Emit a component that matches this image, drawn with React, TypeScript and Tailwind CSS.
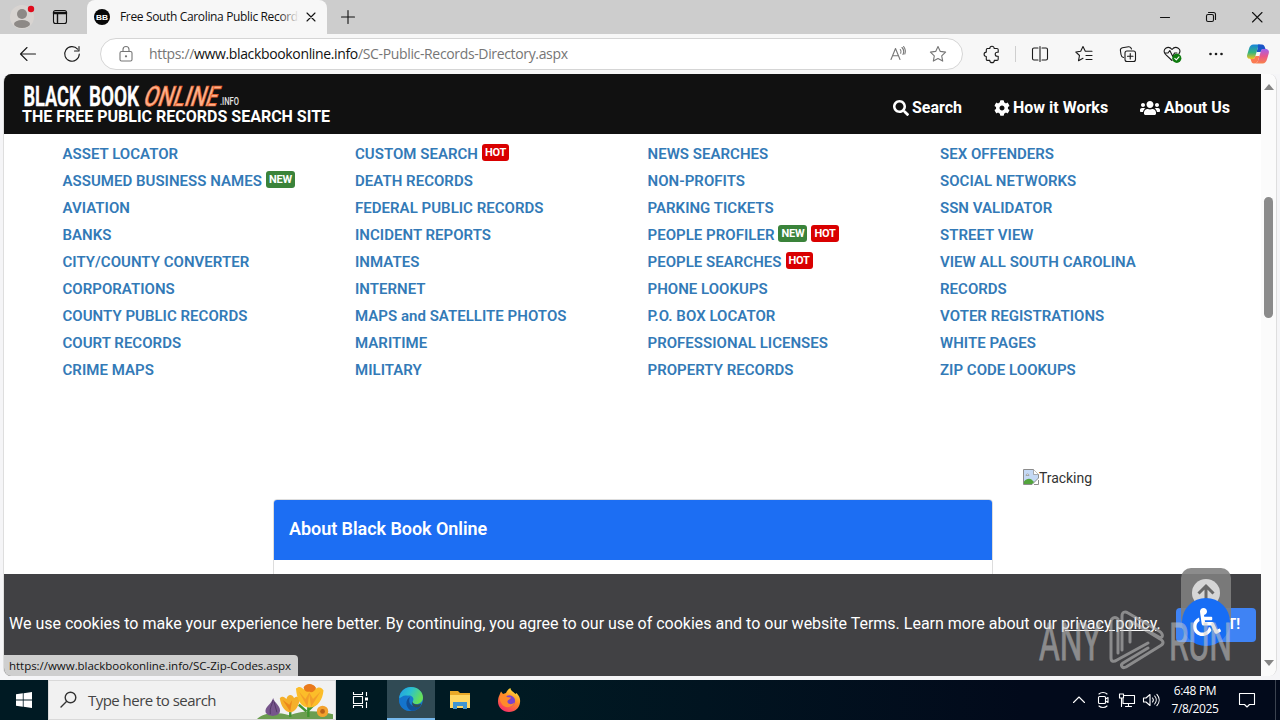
import React from 'react';
import { FaCog, FaSearch, FaUsers, FaWheelchair } from 'react-icons/fa';

interface DirectoryLink {
  label: string;
  tags?: ('NEW' | 'HOT')[];
}

const COLUMNS: DirectoryLink[][] = [
  [
    { label: 'ASSET LOCATOR' },
    { label: 'ASSUMED BUSINESS NAMES', tags: ['NEW'] },
    { label: 'AVIATION' },
    { label: 'BANKS' },
    { label: 'CITY/COUNTY CONVERTER' },
    { label: 'CORPORATIONS' },
    { label: 'COUNTY PUBLIC RECORDS' },
    { label: 'COURT RECORDS' },
    { label: 'CRIME MAPS' },
  ],
  [
    { label: 'CUSTOM SEARCH', tags: ['HOT'] },
    { label: 'DEATH RECORDS' },
    { label: 'FEDERAL PUBLIC RECORDS' },
    { label: 'INCIDENT REPORTS' },
    { label: 'INMATES' },
    { label: 'INTERNET' },
    { label: 'MAPS and SATELLITE PHOTOS' },
    { label: 'MARITIME' },
    { label: 'MILITARY' },
  ],
  [
    { label: 'NEWS SEARCHES' },
    { label: 'NON-PROFITS' },
    { label: 'PARKING TICKETS' },
    { label: 'PEOPLE PROFILER', tags: ['NEW', 'HOT'] },
    { label: 'PEOPLE SEARCHES', tags: ['HOT'] },
    { label: 'PHONE LOOKUPS' },
    { label: 'P.O. BOX LOCATOR' },
    { label: 'PROFESSIONAL LICENSES' },
    { label: 'PROPERTY RECORDS' },
  ],
  [
    { label: 'SEX OFFENDERS' },
    { label: 'SOCIAL NETWORKS' },
    { label: 'SSN VALIDATOR' },
    { label: 'STREET VIEW' },
    { label: 'VIEW ALL SOUTH CAROLINA RECORDS' },
    { label: 'VOTER REGISTRATIONS' },
    { label: 'WHITE PAGES' },
    { label: 'ZIP CODE LOOKUPS' },
  ],
];

interface IconProps {
  children: React.ReactNode;
  className?: string;
}

// 20x20 line icon used by the browser chrome and the tray
const Icon: React.FC<IconProps> = ({ children, className = '' }) => (
  <svg
    viewBox="0 0 20 20"
    className={`size-5 shrink-0 fill-none stroke-current ${className}`}
    strokeWidth={1.1}
    strokeLinecap="round"
    strokeLinejoin="round"
  >
    {children}
  </svg>
);

const Slot: React.FC<IconProps> = ({ children, className = 'w-11' }) => (
  <div className={`flex h-full shrink-0 items-center justify-center ${className}`}>{children}</div>
);

const TitleBar = () => (
  <div className="flex h-[34px] bg-[#cdcdcd] text-[#111]">
    <Slot>
      <svg viewBox="0 0 26 26" className="size-[26px]">
        <circle cx="13" cy="13" r="12" fill="#d8d4d1" />
        <circle cx="13" cy="10" r="5" fill="#8d8986" />
        <ellipse cx="13" cy="20" rx="8" ry="4" fill="#8d8986" />
        <circle cx="22" cy="5" r="3.2" fill="#e00b1c" />
      </svg>
    </Slot>
    <Slot className="w-8">
      <Icon>
        <rect x="3.5" y="3.5" width="13" height="13" rx="2" />
        <path d="M3.5 5.5h13M3.5 6.500h13M7.500 7v9" strokeWidth={1.4} />
      </Icon>
    </Slot>
    <div className="ml-[11px] flex w-60 items-center rounded-t-lg bg-[#f7f7f7] pl-[7px]">
      <svg viewBox="0 0 16 16" className="size-4">
        <circle cx="8" cy="8" r="8" fill="#080808" />
        <text x="8" y="11" textAnchor="middle" fontSize="8" fontWeight="700" fill="#fff" fontFamily="Liberation Sans, sans-serif" textLength="12" lengthAdjust="spacingAndGlyphs">
          BB
        </text>
      </svg>
      <div className="relative ml-2.5 w-[179px] overflow-hidden text-xs tracking-[-0.350px] whitespace-nowrap">
        Free South Carolina Public Records
        <div className="absolute inset-y-0 right-0 w-5 bg-linear-to-r from-transparent to-[#f7f7f7]" />
      </div>
      <Icon className="ml-[2px]">
        <path d="M6 6l8 8M14 6l-8 8" />
      </Icon>
    </div>
    <Slot className="w-[42px]">
      <Icon>
        <path d="M10 3.5v13M3.5 10h13" />
      </Icon>
    </Slot>
    <div className="flex-1" />
    <Slot className="w-[46px]">
      <Icon>
        <path d="M5.5 10.5h9" />
      </Icon>
    </Slot>
    <Slot className="w-[46px]">
      <Icon>
        <rect x="5.5" y="7.5" width="7" height="7" rx="1.5" />
        <path d="M7.5 5.5h5a2 2 0 0 1 2 2v5" />
      </Icon>
    </Slot>
    <Slot className="w-[46px]">
      <Icon>
        <path d="M5.5 5.5l9.5 9.5M15 5.5l-9.5 9.5" />
      </Icon>
    </Slot>
  </div>
);

const Toolbar = () => (
  <div className="flex h-10 items-center bg-[#f7f7f7] pl-1.5 text-[#1b1b1b]">
    <Slot>
      <Icon>
        <path d="M17.5 10H2.5M9 3.5L2.5 10 9 16.5" />
      </Icon>
    </Slot>
    <Slot>
      <Icon>
        <path d="M15.6 5.2A7.3 7.3 0 1 0 17.3 10M17 2.5v4.500h-4.500" />
      </Icon>
    </Slot>
    <div className="ml-1.5 flex h-8 w-[863px] shrink-0 items-center rounded-full border border-[#d5d5d5] bg-white pl-[15px] text-[#767676]">
      <Icon>
        <rect x="4" y="7.5" width="12" height="9.5" rx="1.5" />
        <path d="M7 7.5V5.500a3 3 0 0 1 6 0v2" />
        <circle cx="10" cy="12.3" r=".6" fill="currentColor" />
      </Icon>
      <span className="ml-[13px] flex-1 text-sm tracking-[-0.350px]">
        https://<span className="text-[#111]">www.blackbookonline.info</span>/SC-Public-Records-Directory.aspx
      </span>
      <Icon>
        <path d="M3 15.5L7.5 4.500 12 15.500M4.500 11.800h6M12.300 5.500c1 1.200 1 2.600.4 3.800M14 3.500c2 2 2.100 4.600 1 7" />
        <path d="M15.600 2.500c1.900 2.500 2.200 5 1.200 7.500" />
      </Icon>
      <Icon className="mr-[14px] ml-5">
        <path d="M10 2.500l2.300 4.900 5.300.7-3.900 3.700 1 5.300-4.700-2.600-4.700 2.600 1-5.300-3.900-3.700 5.300-.7z" />
      </Icon>
    </div>
    <Slot className="ml-[7px] w-11">
      <Icon>
        <path d="M5 4.500h2.800a2.200 2.200 0 0 1 4.400 0H15a1.200 1.200 0 0 1 1.200 1.200v2.500h-1a2 2 0 0 0 0 4h1v3a1.200 1.200 0 0 1-1.200 1.200h-2.700a2.200 2.200 0 0 1-4.500 0H5.500a1.200 1.200 0 0 1-1.200-1.200v-2.700a2.200 2.200 0 0 1 0-4.400V5.700z" />
      </Icon>
    </Slot>
    <div className="mr-0.5 ml-px h-4 w-px bg-[#cfcfcf]" />
    <Slot>
      <Icon>
        <path d="M8 4H4a1.500 1.500 0 0 0-1.500 1.500v9A1.500 1.500 0 0 0 4 16h4M12 4h4a1.500 1.500 0 0 1 1.500 1.500v9A1.500 1.500 0 0 1 16 16h-4M10 2.500v15" />
      </Icon>
    </Slot>
    <Slot>
      <Icon>
        <path d="M11.300 7.300L9 2.500 6.700 7.300l-4.900.7 3.700 3.500-1 5.200L9 14.300M11.300 7.300H18M12 11.500h6M12 15.500h6" />
      </Icon>
    </Slot>
    <Slot>
      <Icon>
        <path d="M5.500 13.500C3.500 13 3.200 12 3 10.500l-.6-4C2.200 5 3 4 4.500 3.700l6-.9c1.500-.2 2.600.6 3 2.200" />
        <rect x="7" y="7" width="10.5" height="10.5" rx="2" />
        <path d="M12.250 9.500v5.500M9.500 12.250H15" />
      </Icon>
    </Slot>
    <Slot>
      <Icon>
        <path d="M10 16.500L3.500 10.300C1.500 8.300 1.800 5.500 3.700 4.200 5.700 2.900 8.300 3.300 10 5.500c1.700-2.200 4.300-2.600 6.300-1.300 1.700 1.200 2 3.500.7 5.400M3 9h3l1.800-2.500 3 6L12.500 9H15" />
        <circle cx="14.8" cy="14.3" r="4.6" fill="#0f7b0f" stroke="none" />
        <path d="M12.800 14.400l1.500 1.500 2.700-3" stroke="#fff" />
      </Icon>
    </Slot>
    <Slot>
      <Icon>
        <g fill="currentColor" stroke="none">
          <circle cx="4.5" cy="10" r="1.3" />
          <circle cx="10" cy="10" r="1.3" />
          <circle cx="15.5" cy="10" r="1.3" />
        </g>
      </Icon>
    </Slot>
    <Slot className="w-10">
      <Copilot />
    </Slot>
  </div>
);

const Copilot = () => (
  <svg viewBox="0 0 24 24" className="size-6">
    <defs>
      <linearGradient id="cpA" x1="0" y1="0" x2="0" y2="1">
        <stop offset="0" stopColor="#1684dc" />
        <stop offset=".55" stopColor="#35b57e" />
        <stop offset="1" stopColor="#f2c41c" />
      </linearGradient>
      <linearGradient id="cpB" x1="0" y1="0" x2="0" y2="1">
        <stop offset="0" stopColor="#a161ee" />
        <stop offset=".5" stopColor="#e9578b" />
        <stop offset="1" stopColor="#f9824a" />
      </linearGradient>
    </defs>
    <path d="M17 7h2.500c2.500 0 4 1.800 3.300 4.200l-1.800 6c-.7 2.400-2 4.300-4.500 4.300H8.500c2 0 3-1 3.600-2.900l2.500-8.600C15 8.500 15.500 7 17 7z" fill="url(#cpB)" />
    <path d="M7 17H4.500C2 17 .5 15.200 1.200 12.800l1.800-6C3.700 4.400 5 2.500 7.500 2.500h8c-2 0-3 1-3.600 2.900L9.400 14C9 15.500 8.500 17 7 17z" fill="url(#cpA)" />
    <path d="M12 2.500h4c1.500 0 2.300 1 2.700 2.300L19.500 7H17c-1.500 0-2 1.500-2.400 3h-4l1.300-4.600z" fill="#1b55c8" />
    <path d="M8 21.500c-1.500 0-2.300-1-2.700-2.300L4.500 17H7c1.500 0 2-1.500 2.400-3h4l-1.300 4.600c-.6 1.900-2 2.900-4.100 2.900z" fill="#fb7b52" />
  </svg>
);

const SiteHeader = () => (
  <header className="flex h-[60px] shrink-0 justify-between bg-[#111] pr-[31px] pl-[18px] text-white">
    <div className="pt-[9px]">
      <svg viewBox="0 0 220 26" className="h-[26px] w-[220px] overflow-visible" fontFamily="Liberation Sans Narrow, Roboto, sans-serif">
        <text x="1.5" y="23" fontSize="28" fontWeight="600" fill="#fff" stroke="#fff" strokeWidth=".5" textLength="57" lengthAdjust="spacingAndGlyphs">
          BLACK
        </text>
        <text x="67" y="23" fontSize="28" fontWeight="600" fill="#fff" stroke="#fff" strokeWidth=".5" textLength="50" lengthAdjust="spacingAndGlyphs">
          BOOK
        </text>
        <text fontSize="28" fontWeight="500" fill="#ffb08a" stroke="#e8622c" strokeWidth=".7" textLength="74" lengthAdjust="spacingAndGlyphs" transform="translate(120 23) skewX(-18)">
          ONLINE
        </text>
        <text x="198" y="22" fontSize="10.5" fontWeight="500" fill="#e4e4e4" textLength="19" lengthAdjust="spacingAndGlyphs">
          .INFO
        </text>
      </svg>
      <div className="-mt-[2px] text-base leading-5 font-bold whitespace-nowrap">THE FREE PUBLIC RECORDS SEARCH SITE</div>
    </div>
    <nav className="flex items-center pt-[7px] text-base font-bold whitespace-nowrap">
      <a className="mr-8 flex items-center gap-[3px]">
        <FaSearch className="size-4" />
        Search
      </a>
      <a className="mr-8 flex items-center gap-[3px]">
        <FaCog className="size-4" />
        How it Works
      </a>
      <a className="flex items-center gap-1">
        <FaUsers className="size-5" />
        About Us
      </a>
    </nav>
  </header>
);

const Tag: React.FC<{ kind: 'NEW' | 'HOT' }> = ({ kind }) => (
  <span
    className={`relative -top-[3px] ml-1 inline-block h-[17px] rounded-[3px] px-[3px] text-[11px] leading-[17px] font-bold tracking-[-0.200px] text-white ${
      kind === 'NEW' ? 'bg-[#3a833a]' : 'bg-[#d90000]'
    }`}
  >
    {kind}
  </span>
);

const Directory = () => (
  <div className="flex pt-[7px] pl-[58.5px]">
    {COLUMNS.map((column, index) => (
      <ul key={index} className="w-[292.5px] pr-[60px] text-[15px] leading-[27px] font-semibold tracking-[0.030px] text-[#337ab7]">
        {column.map((link) => (
          <li key={link.label} className={link.tags ? 'h-[27px] whitespace-nowrap' : ''}>
            {link.label}
            {link.tags?.map((tag) => (
              <Tag key={tag} kind={tag} />
            ))}
          </li>
        ))}
      </ul>
    ))}
  </div>
);

const BrokenImage = () => (
  <svg viewBox="0 0 16 16" className="size-4">
    <path d="M.5.5h10l5 5V9L9 15.500H.5z" fill="#c5d9f5" stroke="#8c8c8c" />
    <path d="M1 15v-2.500C3 10 6 9 8.500 10.500L11 13l-2 2z" fill="#53a43c" />
    <path d="M3 6.500a1.500 1.500 0 0 1 3 0zM10.500.5v5h5" fill="#fff" stroke="#8c8c8c" strokeWidth=".7" />
    <path d="M15.500 11v4.500H11" fill="none" stroke="#8c8c8c" />
  </svg>
);

const CookieBar = () => (
  <div className="flex h-[102px] shrink-0 items-center bg-[#414144] px-[5px] text-base text-white">
    <p className="flex-1 pb-0.5 whitespace-nowrap">
      We use cookies to make your experience here better. By continuing, you agree to our use of cookies and to our website Terms. Learn more about our{' '}
      <a className="underline">privacy policy</a>.
    </p>
    <button className="h-[34px] w-20 rounded-[4px] bg-[#3f83f4] pr-4 pb-0.5 text-right text-sm font-bold">GOT IT!</button>
  </div>
);

// Scroll-to-top button with the accessibility badge over it
const FloatingButtons = () => (
  <div className="absolute top-[568px] left-[1181px] h-[78px] w-[50px]">
    <div className="flex h-[60px] justify-center rounded-[10px] bg-[#808080]/90 pt-[11px]">
      <svg viewBox="0 0 28 28" className="size-7">
        <circle cx="14" cy="14" r="14" fill="#d6d6d6" />
        <path d="M14 24V7M6.500 14.500L14 7l7.500 7.500" fill="none" stroke="#686868" strokeWidth="3" />
      </svg>
    </div>
    <div className="absolute bottom-0 left-px flex size-12 items-center justify-center rounded-full bg-[#176df5] pl-0.5 text-white">
      <FaWheelchair className="size-7" />
    </div>
  </div>
);

const Watermark = () => (
  <svg viewBox="0 0 196 64" className="absolute top-[608px] left-[1038px] h-16 w-[196px] overflow-visible opacity-55">
    <g fill="#c8c8c8" stroke="#c8c8c8" strokeWidth=".9" fontFamily="Liberation Sans Narrow, Roboto, sans-serif" fontSize="51">
      <text x="1" y="51.500" textLength="62" lengthAdjust="spacingAndGlyphs">
        ANY
      </text>
      <text x="131" y="51.500" textLength="63" lengthAdjust="spacingAndGlyphs">
        RUN
      </text>
    </g>
    <g fill="none" stroke="#c8c8c8" strokeWidth="3" strokeLinejoin="round" strokeLinecap="round">
      <path d="M80 11c-3-3-7-1-7 3v36c0 4 3 4 6 2l31-17M80 11v34" />
      <path d="M84 42V8c0-4 3-5 6-3l31 18c5 3 4 8 0 6L92 13v21" />
      <path d="M96 15l26 16c4 2 4 5 0 7L88 59c-4 2-6-2-3-4l25-15" />
    </g>
  </svg>
);

const Scrollbar = () => (
  <div className="flex w-[15px] flex-col items-center rounded-r-lg bg-[#fbfbfb]">
    <svg viewBox="0 0 10 6" className="mt-2.5 h-1.5 w-2.5">
      <path d="M0 6l5-6 5 6z" fill="#858585" />
    </svg>
    <div className="mt-[107px] h-[121px] w-[9px] rounded-full bg-[#8b8b8b]" />
    <div className="flex-1" />
    <svg viewBox="0 0 10 6" className="mb-2.5 h-1.5 w-2.5">
      <path d="M0 0l5 6 5-6z" fill="#858585" />
    </svg>
  </div>
);

const Flowers = () => (
  <svg viewBox="8 0 80 40" className="h-[38px] w-20">
    <path d="M8 40c8-7 20-8 34-4 16-6 30-5 46-1v5z" fill="#6c9e50" />
    <path d="M43 38V27M62 38V17M62 31l8-8M60 32l-8-7" fill="none" stroke="#41942f" strokeWidth="2.5" />
    <path d="M25 18c1 5 9 9 7 15-2 5-13 5-15 0-1-6 6-8 8-15z" fill="#77558c" />
    <path d="M25 20c-1 5-4 8-3 15M26 22l3 11" fill="none" stroke="#513765" />
    <path d="M32 18c3-3 5-1 7 1 1-5 6-6 8-1 3-3 5-1 6 1-1 8-5 14-10 14s-10-6-11-15z" fill="#f5b02a" />
    <path d="M35 20l8 12 2-12-3 5zM51 20l-6 12" fill="#ea7e19" opacity=".8" />
    <path d="M49 8c3-3 6-2 8 1 2-6 10-8 13-1 4-3 7 0 8 2-1 10-6 18-15 18S50 20 49 8z" fill="#fcbd29" />
    <path d="M57 7c2-5 10-5 13 0-1 4-5 6-7 4-3 1-5-1-6-4z" fill="#e9791c" />
    <path d="M52 11l9 16 2-13 2 13 10-16-8 8-4-7-4 7z" fill="#f0922a" opacity=".7" />
    <circle cx="77" cy="32" r="6" fill="#f3a22d" />
    <circle cx="77" cy="32" r="2.5" fill="#b96119" />
  </svg>
);

const EdgeLogo = () => (
  <svg viewBox="0 0 24 24" className="size-6">
    <defs>
      <linearGradient id="edgeTop" x1="0" y1="0" x2="1" y2=".4">
        <stop offset="0" stopColor="#219be4" />
        <stop offset=".5" stopColor="#2bc1cf" />
        <stop offset="1" stopColor="#66df58" />
      </linearGradient>
    </defs>
    <circle cx="12" cy="12" r="12" fill="#1679cf" />
    <path d="M.2 11C1 4.500 6 0 12 0c7 0 12 5 12 10.500 0 4-3 6.500-6.500 6.500-3 0-4.500-1-3.500-3 1.500-3-1-5.500-4-5.500-4 0-7 2-9.800 2.500z" fill="url(#edgeTop)" />
    <path d="M9 9c-4 4-2 12 5 14.700C5 25.500 0 19 0 13 2 9 6 7.500 9 9z" fill="#1474cc" />
    <path d="M11 10c-3 7 3 12 11.500 8C20 22.500 15 24.500 12 23.500 6 20.500 6 12.500 11 10z" fill="#124f96" />
    <path d="M13.500 14.500c0 3 5 4 9 2-.5 1.500-1.500 2.800-2.500 3.500-5 1.500-8-2-6.500-5.500z" fill="#304c55" />
  </svg>
);

const FirefoxLogo = () => (
  <svg viewBox="0 0 24 24" className="size-6">
    <defs>
      <linearGradient id="fox" x1=".8" y1="0" x2=".25" y2="1">
        <stop offset="0" stopColor="#fff142" />
        <stop offset=".45" stopColor="#ff8b25" />
        <stop offset="1" stopColor="#f72a6c" />
      </linearGradient>
    </defs>
    <path d="M2.500 7L4 3.500 6 6l3-1c1-2.500 2.500-4 4.500-5 0 3 3 3.500 5 6l1-1c3 3 4 6 3.500 9.500C22.500 20 18 24 12 24S1 19.500 1 13.500C1 11 1.500 9 2.500 7z" fill="url(#fox)" />
    <circle cx="12.3" cy="13" r="5.8" fill="#7a43cc" />
    <path d="M3 8c3-2 6-1 7 1l4 .5c-.5 2-3 2-3.500 3.500-.5 3 4 4.500 7 1.500-1 5-10 7-13 1C3 13 2 10 3 8z" fill="#ff8a2b" />
  </svg>
);

const Taskbar = () => (
  <div className="flex h-10 bg-linear-to-r from-[#001a23] from-40% to-[#020a1b] to-80% text-white">
    <Slot className="w-12">
      <svg viewBox="0 0 16 16" className="size-4 fill-white">
        <path d="M0 2.200l6.800-.9v6.300H0zM7.600 1.200L16 0v7.600H7.600zM0 8.400h6.800v6.300L0 13.800zM7.600 8.400H16V16l-8.400-1.200z" />
      </svg>
    </Slot>
    <div className="flex w-72 items-center border border-[#d9d9d9] bg-[#f1f1f1] pl-2.5 text-[#333]">
      <Icon>
        <circle cx="11.5" cy="7.5" r="5.3" strokeWidth={1.4} />
        <path d="M7.500 11.500L2 17" strokeWidth={1.4} />
      </Icon>
      <span className="ml-[9px] flex-1 text-[15px] tracking-[-0.530px] whitespace-nowrap text-[#444]">Type here to search</span>
      <Flowers />
    </div>
    <Slot className="w-12">
      <Icon>
        <g strokeLinecap="butt">
          <rect x="3.5" y="6.5" width="9" height="7" />
          <path d="M3.500 2v2.500h9V2M3.500 18v-2.500h9V18M16.500 2v4M16.500 12v6" />
          <path d="M15 9h3" strokeWidth={3} />
        </g>
      </Icon>
    </Slot>
    <div className="ml-[3px] flex w-12 items-center justify-center border-b-2 border-[#76b9ed] bg-[#304a54]">
      <EdgeLogo />
    </div>
    <Slot className="w-[49px]">
      <svg viewBox="0 0 22 20" className="h-5 w-[22px]">
        <path d="M1 1h8l2 2h10v15H1z" fill="#e9a928" />
        <path d="M1 5h20v13H1z" fill="#ffd764" />
        <path d="M4 19v-7h14v7h-4v-3H8v3z" fill="#3f94d1" />
      </svg>
    </Slot>
    <Slot className="w-[49px]">
      <FirefoxLogo />
    </Slot>
    <div className="flex-1" />
    <Slot className="w-6">
      <Icon>
        <path d="M4.500 12.500L10 7l5.500 5.500" />
      </Icon>
    </Slot>
    <Slot className="w-6">
      <Icon>
        <rect x="5.5" y="6.5" width="7" height="7" rx="1" />
        <path d="M12.500 9l2.500-1.500v5L12.500 11M6 4c2-2 6-2 8 0M6 16c2 2 6 2 8 0" />
      </Icon>
    </Slot>
    <Slot className="w-6">
      <Icon>
        <path d="M7 5.500h10.500v8H6V9M8.500 16.500h6M11.500 13.500v3M2.500 4h4v4h-4zM4.500 8v8.500" />
      </Icon>
    </Slot>
    <Slot className="w-6">
      <Icon>
        <path d="M2.500 8h2.500l4-3.500v11L5 12H2.500zM11.500 8c1 1.200 1 2.800 0 4M13.700 6c2 2.300 2 5.700 0 8M15.900 4.300c3 3.400 3 8 0 11.400" />
      </Icon>
    </Slot>
    <div className="flex w-16 flex-col items-center justify-center text-xs leading-[18px] tracking-[-0.350px] whitespace-nowrap">
      <span>6:48 PM</span>
      <span>7/8/2025</span>
    </div>
    <Slot className="w-10">
      <Icon>
        <path d="M2.500 3.500h15v11h-5L10 17l-2.500-2.500h-5z" />
      </Icon>
    </Slot>
    <div className="mr-1 ml-2 w-px bg-[#3b4350]" />
  </div>
);

export default function App() {
  return (
    <div className="relative flex h-[720px] w-[1280px] flex-col overflow-hidden bg-[#f5f5f7] font-['Open_Sans',sans-serif]">
      <TitleBar />
      <Toolbar />
      <div className="mr-[3px] mb-1 ml-[3px] flex min-h-0 flex-1 overflow-hidden rounded-lg border-x border-[#dedede] bg-white">
        <main className="relative flex w-[1257px] flex-col font-[Roboto,sans-serif]">
          <SiteHeader />
          <section className="min-h-0 flex-1 overflow-hidden">
            <Directory />
            <div className="mt-[85px] flex h-[30px] items-start pl-[1019px] text-sm text-[#333]">
              <BrokenImage />
              <span className="-mt-px tracking-[-0.050px]">Tracking</span>
            </div>
            <div className="ml-[269px] h-40 w-[720px] rounded-t border border-[#ddd]">
              <h3 className="flex h-[60px] items-center rounded-t-[3px] bg-[#1c6ef3] px-[15px] pb-0.5 text-lg font-semibold tracking-[-0.050px] text-white">
                About Black Book Online
              </h3>
            </div>
          </section>
          <CookieBar />
          <div className="absolute bottom-0 left-0 flex h-[21px] w-[294px] items-center rounded-tr bg-[#cfcfcf] pl-[5px] font-['Open_Sans',sans-serif] text-[11.5px] tracking-[-0.030px] whitespace-nowrap text-[#111]">
            https://www.blackbookonline.info/SC-Zip-Codes.aspx
          </div>
        </main>
        <Scrollbar />
      </div>
      <Taskbar />
      <FloatingButtons />
      <Watermark />
    </div>
  );
}
